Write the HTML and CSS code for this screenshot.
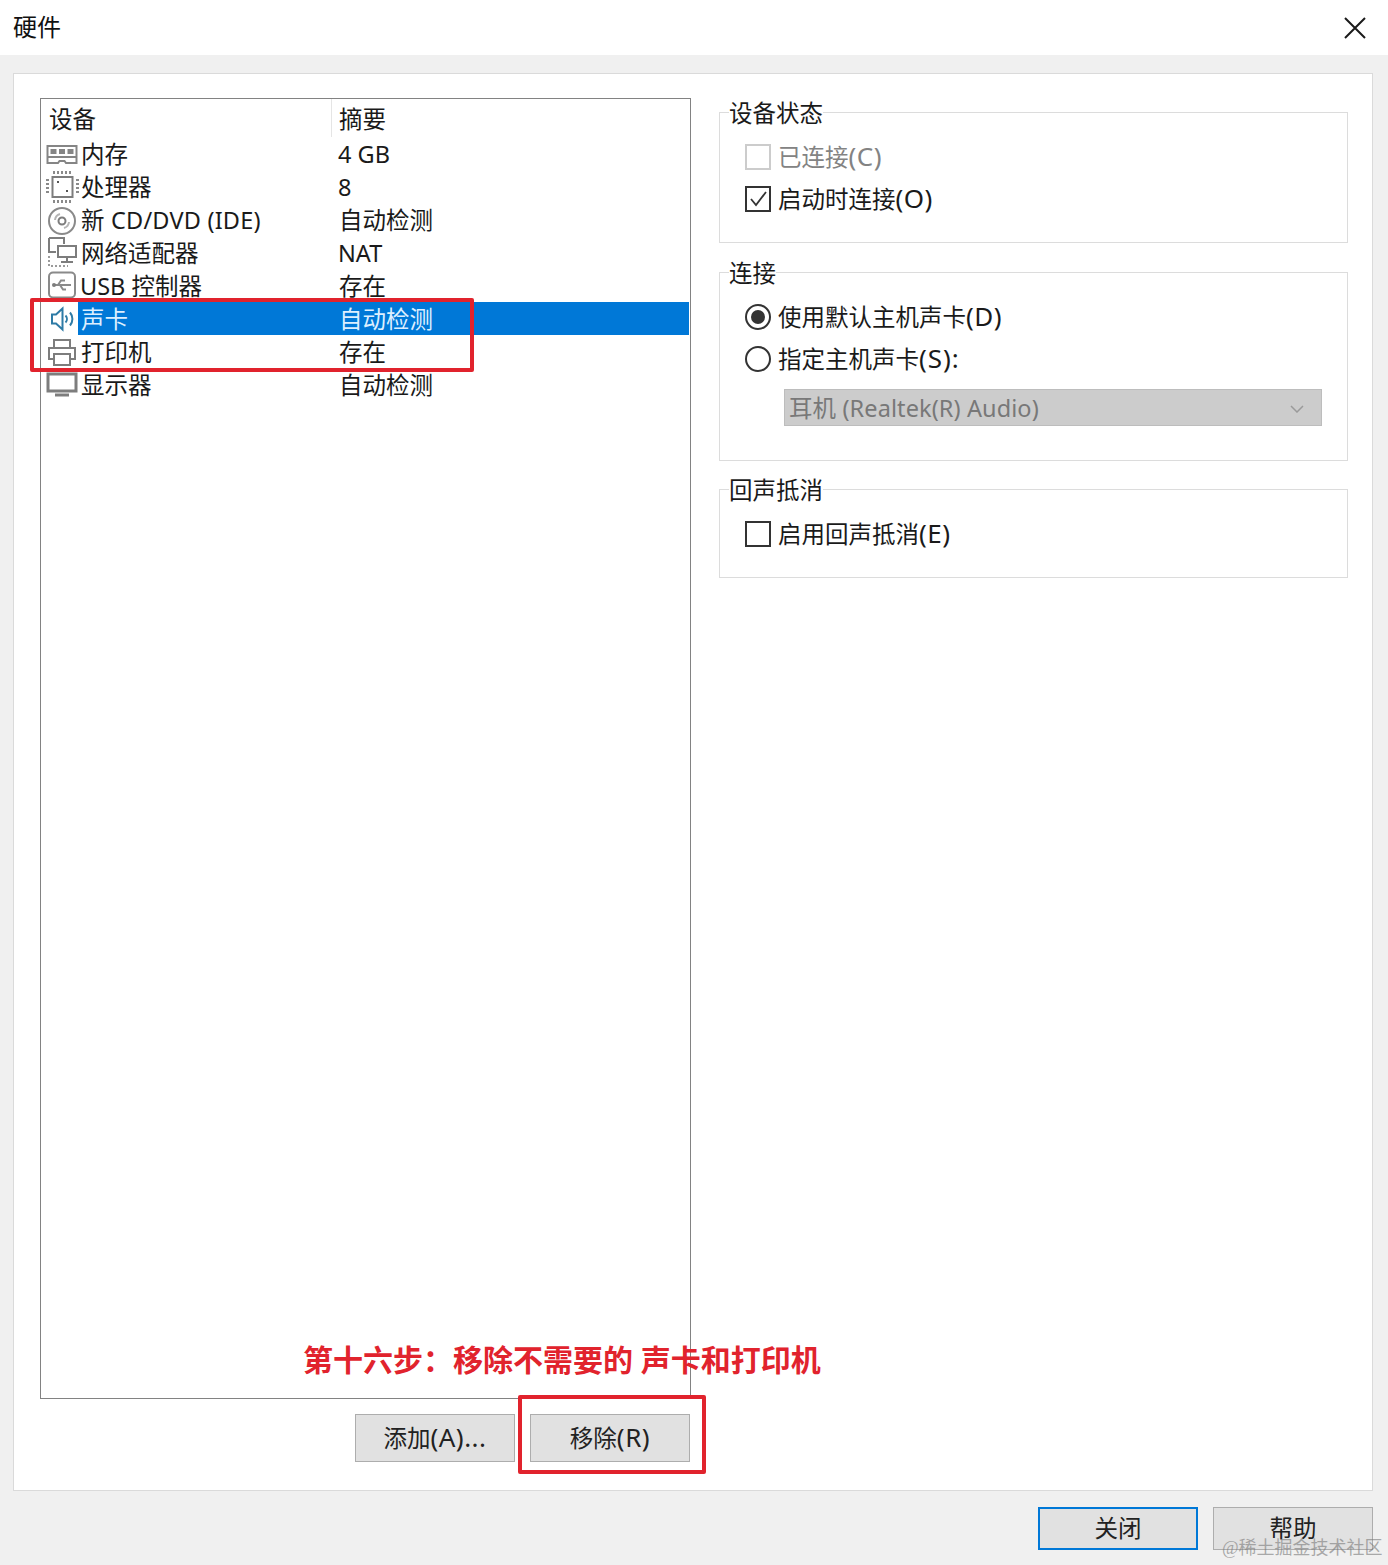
FILE: index.html
```html
<!DOCTYPE html>
<html lang="zh-CN">
<head>
<meta charset="utf-8">
<title>硬件</title>
<link rel="stylesheet" href="styles.css">
</head>
<body>
<header class="titlebar">
  <span class="title">硬件</span>
  <svg class="close" width="22" height="22" viewBox="0 0 22 22"><path d="M1 1L21 21M21 1L1 21" stroke="#1a1a1a" stroke-width="2" fill="none"/></svg>
</header>
<main class="panel">
  <section class="left">
    <div class="list">
      <div class="list-head"><span class="col-a">设备</span><span class="col-b">摘要</span></div>
      <div class="row">
        <svg class="ico" viewBox="0 0 32 32"><g fill="none" stroke="#858585" stroke-width="2"><path d="M1.500 8H30.500V19H1.500ZM1.500 19V25H12L13.500 23H18.500L20 25H30.500V19"/></g><g fill="#858585"><rect x="4.500" y="11" width="6" height="5"/><rect x="13" y="11" width="6" height="5"/><rect x="21.500" y="11" width="6" height="5"/></g></svg>
        <div class="cells"><span class="name">内存</span><span class="sum lat">4 GB</span></div>
      </div>
      <div class="row">
        <svg class="ico" viewBox="0 0 32 32"><rect x="6.500" y="6" width="20" height="20" fill="none" stroke="#7d7d7d" stroke-width="2"/><path d="M8 0V3M12 0V3M16 0V3M20 0V3M24 0V3M8 29V32M12 29V32M16 29V32M20 29V32M24 29V32M0 9H3M0 13H3M0 17H3M0 21H3M30 9H33M30 13H33M30 17H33M30 21H33" stroke="#8a8a8a" stroke-width="2" fill="none"/><rect x="11" y="10" width="2" height="2" fill="#555"/><rect x="20" y="19" width="2" height="2" fill="#555"/></svg>
        <div class="cells"><span class="name">处理器</span><span class="sum lat">8</span></div>
      </div>
      <div class="row">
        <svg class="ico" viewBox="0 0 32 32"><circle cx="16" cy="17" r="13" fill="none" stroke="#8a8a8a" stroke-width="2"/><circle cx="16" cy="17" r="3.500" fill="none" stroke="#7d7d7d" stroke-width="2"/><path d="M9 16A7 7 0 0 1 14 10M23 18A7 7 0 0 1 18 24" fill="none" stroke="#b5b5b5" stroke-width="2"/></svg>
        <div class="cells"><span class="name cd">新 CD/DVD (IDE)</span><span class="sum">自动检测</span></div>
      </div>
      <div class="row">
        <svg class="ico" viewBox="0 0 32 32"><g fill="none" stroke="#7d7d7d" stroke-width="2"><path d="M3 1H18V7M3 1V15H10"/><path d="M12 9H30V20H12ZM21 20V25M15 25H27"/></g><path d="M3 19V29H22" fill="none" stroke="#9a9a9a" stroke-width="2" stroke-dasharray="2 2"/></svg>
        <div class="cells"><span class="name">网络适配器</span><span class="sum lat">NAT</span></div>
      </div>
      <div class="row">
        <svg class="ico" viewBox="0 0 32 32"><rect x="3" y="2.500" width="26" height="25" rx="4" fill="none" stroke="#8a8a8a" stroke-width="2"/><path d="M8 15H25M12 15L15 10.500H19M14 15L17 19.500H20" fill="none" stroke="#8a8a8a" stroke-width="2"/><circle cx="8" cy="15" r="2" fill="#7d7d7d"/></svg>
        <div class="cells"><span class="name usb">USB 控制器</span><span class="sum">存在</span></div>
      </div>
      <div class="row selected">
        <svg class="ico" viewBox="0 0 32 32"><path d="M6 11.500H10L16.500 5.500V26.500L10 20.500H6Z" fill="none" stroke="#2e7ba6" stroke-width="2"/><path d="M19.500 12.500A5 5 0 0 1 19.500 19.500M24 9.500A10 10 0 0 1 24 22.500" fill="none" stroke="#2e7ba6" stroke-width="2"/></svg>
        <div class="cells"><span class="name">声卡</span><span class="sum">自动检测</span></div>
      </div>
      <div class="row">
        <svg class="ico" viewBox="0 0 32 32"><g fill="none" stroke="#7d7d7d" stroke-width="2"><path d="M8 12V4H24V12"/><path d="M8 23H3V12H29V23H24"/><path d="M8 18H24V29H8Z"/></g></svg>
        <div class="cells"><span class="name">打印机</span><span class="sum">存在</span></div>
      </div>
      <div class="row">
        <svg class="ico" viewBox="0 0 32 32"><rect x="2" y="5" width="28" height="17" fill="none" stroke="#7d7d7d" stroke-width="3"/><path d="M9 26H23" stroke="#7d7d7d" stroke-width="3" fill="none"/></svg>
        <div class="cells"><span class="name">显示器</span><span class="sum">自动检测</span></div>
      </div>
    </div>
    <div class="list-actions">
      <button class="btn">添加<span class="hk">(A)...</span></button>
      <button class="btn">移除<span class="hk">(R)</span></button>
    </div>
  </section>
  <section class="right">
    <fieldset class="group g1">
      <legend>设备状态</legend>
      <div class="opt disabled"><span class="box"></span><span>已连接<span class="hk">(C)</span></span></div>
      <div class="opt"><span class="box"><svg width="22" height="22" viewBox="0 0 22 22"><path d="M4 11L9 17L19 4" fill="none" stroke="#333" stroke-width="1.800"/></svg></span><span>启动时连接<span class="hk">(O)</span></span></div>
    </fieldset>
    <fieldset class="group g2">
      <legend>连接</legend>
      <div class="opt"><span class="radio on"></span><span>使用默认主机声卡<span class="hk">(D)</span></span></div>
      <div class="opt"><span class="radio"></span><span>指定主机声卡<span class="hk wide">(S):</span></span></div>
      <div class="combo"><span class="combo-text">耳机 (Realtek(R) Audio)</span><svg width="14" height="8" viewBox="0 0 14 8"><path d="M1 1L7 7L13 1" fill="none" stroke="#9a9a9a" stroke-width="1.500"/></svg></div>
    </fieldset>
    <fieldset class="group g3">
      <legend>回声抵消</legend>
      <div class="opt"><span class="box"></span><span>启用回声抵消<span class="hk">(E)</span></span></div>
    </fieldset>
  </section>
</main>
<footer class="footer">
  <button class="btn default">关闭</button>
  <button class="btn">帮助</button>
</footer>
<div class="mark mark-rows"></div>
<div class="mark mark-btn"></div>
<div class="note">第十六步：移除不需要的 声卡和打印机</div>
<div class="watermark">@稀土掘金技术社区</div>
</body>
</html>
```
FILE: styles.css
```css
* { box-sizing: border-box; }
html, body { margin: 0; padding: 0; }
body {
  position: relative;
  width: 1388px;
  height: 1565px;
  overflow: hidden;
  background: #f0f0f0;
  color: #1a1a1a;
  font-family: "Noto Sans", "Noto Sans CJK SC", sans-serif;
  font-size: 23.5px;
  line-height: 33px;
}
.hk { font-size: 26px; letter-spacing: 0.5px; }
.hk.wide { letter-spacing: 1px; }
.titlebar {
  height: 55px;
  background: #fff;
  display: flex;
  align-items: center;
  justify-content: space-between;
  padding: 0 22px 2px 13px;
}
.title { font-size: 24px; color: #111; }
.close { margin-top: 2px; }
.panel {
  height: 1418px;
  margin: 18px 15px 0 13px;
  background: #fff;
  border: 1px solid #dadada;
  padding: 23px 24px 0 26px;
  display: flex;
  gap: 28px;
}
.left { width: 651px; margin-top: 1px; flex: none; }
.list {
  height: 1301px;
  border: 1px solid #828282;
}
.list-head {
  height: 38px;
  display: flex;
  align-items: center;
}
.col-a { width: 291px; height: 100%; padding: 4px 0 0 8px; border-right: 1px solid #e5e5e5; }
.col-b { padding: 4px 0 0 7px; height: 100%; }
.row {
  height: 33px;
  display: flex;
  align-items: center;
  padding-left: 5px;
  padding-right: 1px;
}
.ico { width: 32px; height: 32px; flex: none; overflow: visible; }
.cells {
  flex: 1;
  height: 33px;
  padding-top: 1px;
  display: flex;
  align-items: center;
}
.name { width: 253px; padding-left: 3px; white-space: nowrap; }
.name.cd { letter-spacing: 0.2px; }
.name.usb { padding-left: 2px; margin-right: 1px; width: 252px; }
.sum { padding-left: 8px; }
.sum.lat { margin-left: -1px; }
.selected .cells { background: #0078d7; color: #dcefff; }
.list-actions {
  display: flex;
  justify-content: flex-end;
  gap: 15px;
  margin: 15px 1px 0 0;
}
.btn {
  width: 160px;
  height: 48px;
  background: #e1e1e1;
  border: 1px solid #adadad;
  color: #222;
  font: inherit;
  padding: 0;
}
.right { width: 629px; flex: none; display: flex; flex-direction: column; gap: 13px; }
.group {
  margin: 0;
  padding: 0 0 25px 25px;
  border: 1px solid #dcdcdc;
  min-width: 0;
}
.group legend {
  margin-left: -16px;
  padding: 2px 0 0;
  line-height: 28px;
  background: #fff;
}
.g1 { margin-bottom: 1px; }
.g2 { padding-bottom: 34px; }
.opt {
  height: 36px;
  margin-top: 6px;
  display: flex;
  align-items: center;
  gap: 7px;
}
legend + .opt { margin-top: 12px; }
.box {
  width: 26px;
  height: 26px;
  border: 2px solid #333;
  display: flex;
  align-items: center;
  justify-content: center;
  flex: none;
}
.radio {
  width: 26px;
  height: 26px;
  border: 2px solid #333;
  border-radius: 50%;
  display: flex;
  align-items: center;
  justify-content: center;
  flex: none;
}
.radio.on::after {
  content: "";
  width: 14px;
  height: 14px;
  border-radius: 50%;
  background: #333;
}
.disabled { color: #838383; }
.disabled .box { border-color: #cccccc; }
.combo {
  width: 538px;
  height: 37px;
  margin: 12px 0 0 39px;
  padding: 2px 17px 0 4px;
  background: #cccccc;
  border: 1px solid #bdbdbd;
  color: #787878;
  display: flex;
  align-items: center;
  justify-content: space-between;
}
.combo-text { letter-spacing: 0.1px; }
.footer {
  display: flex;
  justify-content: flex-end;
  gap: 15px;
  padding-right: 15px;
  margin-top: 16px;
}
.footer .btn { height: 43px; }
.btn.default { border: 2px solid #0078d7; }
.mark {
  position: absolute;
  border: 4px solid #e1232d;
  border-radius: 2px;
}
.mark-rows { left: 30px; top: 298px; width: 444px; height: 74px; }
.mark-btn { left: 518px; top: 1395px; width: 188px; height: 79px; }
.note {
  position: absolute;
  left: 303px;
  top: 1340px;
  font-size: 30px;
  line-height: 40px;
  font-weight: 700;
  color: #e1232d;
  white-space: nowrap;
}
.watermark {
  position: absolute;
  left: 1222px;
  top: 1536px;
  font-family: "Liberation Serif", "Noto Sans CJK SC", serif;
  font-size: 18px;
  line-height: 24px;
  color: rgba(120, 120, 120, 0.6);
  white-space: nowrap;
}
```
